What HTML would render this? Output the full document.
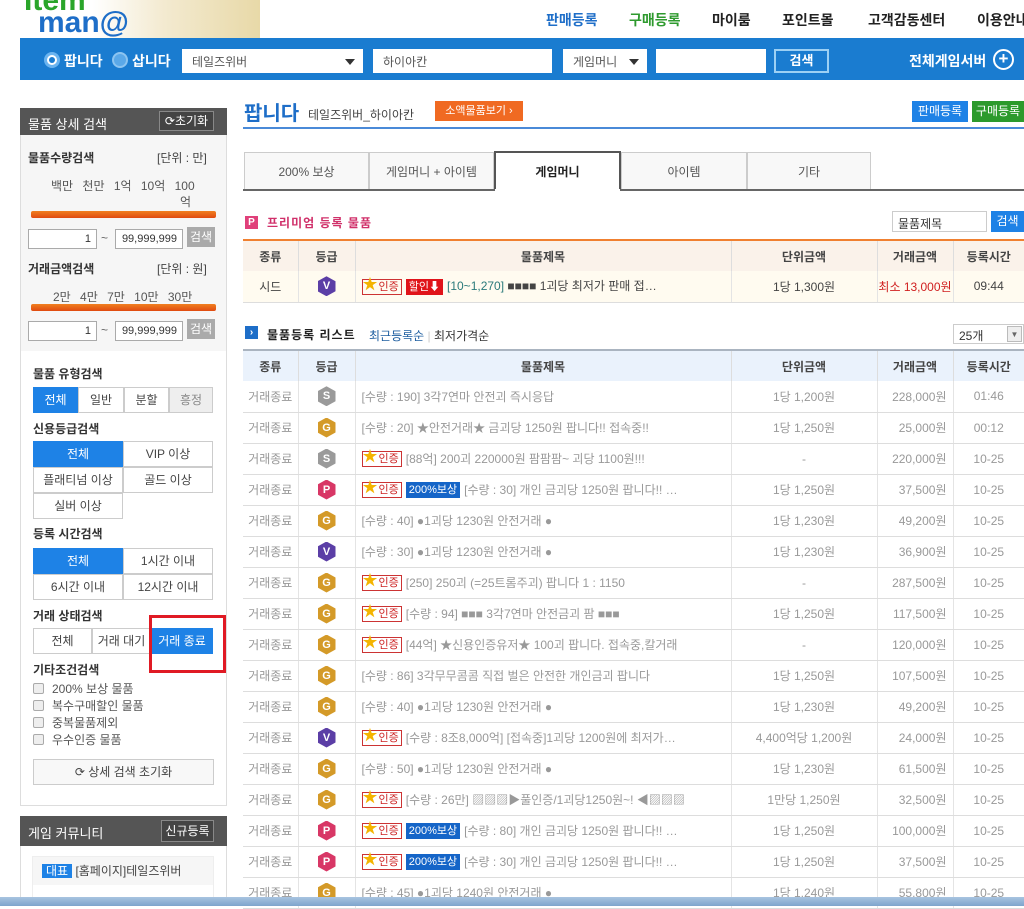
<!DOCTYPE html>
<html><head><meta charset="utf-8"><style>
*{margin:0;padding:0;box-sizing:border-box}
body{width:1024px;height:906px;overflow:hidden;background:#fff;font-family:"Liberation Sans","Noto Sans CJK KR",sans-serif;font-size:12px;color:#333;position:relative}
.a{position:absolute}
.nav{top:10px;font-size:14px;font-weight:bold;color:#222;white-space:nowrap}
.bar{left:20px;top:38px;width:1004px;height:42px;background:#1a7cd0}
.sel{background:#fff;height:24px;top:49px;font-size:12px;color:#555;padding:4px 10px}
.sel i{position:absolute;right:8px;top:10px;border:5px solid transparent;border-top:6px solid #333}
.side{left:20px;width:207px;border:1px solid #ddd}
.dh{background:#555;color:#fff;font-size:13px;padding:6px 8px}
.lbl{font-weight:bold;font-size:12px;color:#333}
.inp{height:20px;border:1px solid #aaa;background:#fff;font-size:11px;text-align:right;padding:3px 5px}
.btn{border:1px solid #ccc;background:#fff;text-align:center;font-size:12px;color:#444;height:26px;line-height:24px}
.on{background:#1e82e6;color:#fff;border-color:#1e82e6}
.slider{height:7px;background:linear-gradient(#f08020,#e04a10);border-radius:2px}
.tab{top:152px;height:38px;line-height:38px;text-align:center;border:1px solid #ccc;background:#f8f8f8;color:#555;font-size:12px}
table{border-collapse:collapse;position:absolute;left:243px;width:781px;table-layout:fixed}
td{height:31px;border-bottom:1px solid #ddd;border-right:1px solid #e4e4e4;text-align:center;color:#999;font-size:12px;white-space:nowrap;overflow:hidden}
td:last-child{border-right:none}
th{height:31px;font-weight:bold;font-size:12px;color:#444;border-right:1px solid #ddd}
th:last-child{border-right:none}
td.t{text-align:left;padding-left:6px}
td.r{text-align:right;padding-right:6px}
.h{display:inline-block;width:18px;height:20px;clip-path:polygon(50% 0,100% 25%,100% 75%,50% 100%,0 75%,0 25%);color:#fff;font-weight:bold;font-size:11px;line-height:20px;text-align:center;vertical-align:middle}
.S{background:#9a9a9a}.G{background:#d49a28}.V{background:#5b3ea6}.P{background:#d83766}
.cert{display:inline-block;border:1px solid #c33;color:#c22;font-size:11px;line-height:14px;padding:0 2px 0 16px;position:relative;margin-right:4px;vertical-align:middle}
.cert:before{content:"★";position:absolute;left:0;top:-2px;color:#f4b400;font-size:15px}
.bo{display:inline-block;background:#1565c8;color:#fff;font-size:11px;line-height:16px;padding:0 3px;margin-right:4px;vertical-align:middle}
.cb{display:inline-block;width:11px;height:11px;border:1px solid #aaa;background:#eee;margin-right:8px;vertical-align:-1px;border-radius:2px}
</style></head><body>
<div class="a" style="left:20px;top:0;width:240px;height:38px;background:linear-gradient(90deg,#fff 30%,#f3ead0 60%,#e8d9a8)"></div>
<div class="a" style="left:24px;top:-14px;font-size:30px;font-weight:bold;color:#2aa52a;line-height:30px">Item</div>
<div class="a" style="left:38px;top:8px;font-size:30px;font-weight:bold;color:#1e6ec8;line-height:30px">man@</div>
<div class="a nav" style="left:546px;color:#1e6ec8">판매등록</div>
<div class="a nav" style="left:629px;color:#2e9a2e">구매등록</div>
<div class="a nav" style="left:712px">마이룸</div>
<div class="a nav" style="left:782px">포인트몰</div>
<div class="a nav" style="left:868px">고객감동센터</div>
<div class="a nav" style="left:977px">이용안내</div>
<div class="a bar"></div>
<div class="a" style="left:44px;top:52px;width:16px;height:16px;border-radius:50%;background:#fff;border:3px solid #6ab4f0"></div>
<div class="a" style="left:49px;top:57px;width:6px;height:6px;border-radius:50%;background:#1a7cd0"></div>
<div class="a" style="left:64px;top:51px;color:#fff;font-size:14px;font-weight:bold">팝니다</div>
<div class="a" style="left:112px;top:52px;width:16px;height:16px;border-radius:50%;background:#5aa8e8;border:2px solid #8cc4f0"></div>
<div class="a" style="left:132px;top:51px;color:#fff;font-size:14px;font-weight:bold">삽니다</div>
<div class="a sel" style="left:182px;width:181px">테일즈위버<i></i></div>
<div class="a sel" style="left:373px;width:179px">하이아칸</div>
<div class="a sel" style="left:563px;width:84px">게임머니<i></i></div>
<div class="a sel" style="left:656px;width:110px"></div>
<div class="a" style="left:774px;top:49px;width:55px;height:24px;border:2px solid #9cd0f4;color:#fff;font-weight:bold;text-align:center;line-height:20px;font-size:13px">검색</div>
<div class="a" style="left:909px;top:51px;color:#fff;font-size:14px;font-weight:bold">전체게임서버</div>
<div class="a" style="left:993px;top:49px;width:21px;height:21px;border:2px solid #fff;border-radius:50%;color:#fff;text-align:center;line-height:16px;font-size:17px;font-weight:bold">+</div>

<div class="a side" style="top:108px;height:698px;background:#fff"></div>
<div class="a" style="left:21px;top:134px;width:205px;height:217px;background:#f6f6f6"></div>
<div class="a dh" style="left:20px;top:108px;width:207px;height:27px">물품 상세 검색</div>
<div class="a" style="left:159px;top:111px;width:55px;height:20px;border:1px solid #888;background:#444;color:#fff;font-size:12px;text-align:center;line-height:18px">⟳초기화</div>
<div class="a lbl" style="left:28px;top:149px">물품수량검색</div>
<div class="a" style="left:157px;top:149px;color:#444">[단위 : 만]</div>
<div class="a" style="left:51px;top:177px;color:#555;word-spacing:6px">백만 천만 1억 10억 100</div>
<div class="a" style="left:180px;top:193px;color:#555">억</div>
<div class="a slider" style="left:31px;top:211px;width:185px"></div>
<div class="a inp" style="left:28px;top:229px;width:69px">1</div>
<div class="a" style="left:101px;top:231px;color:#666">~</div>
<div class="a inp" style="left:115px;top:229px;width:68px">99,999,999</div>
<div class="a" style="left:187px;top:227px;width:28px;height:20px;background:#aaa;color:#fff;text-align:center;line-height:20px">검색</div>
<div class="a lbl" style="left:28px;top:260px">거래금액검색</div>
<div class="a" style="left:157px;top:260px;color:#444">[단위 : 원]</div>
<div class="a" style="left:53px;top:288px;color:#555;word-spacing:6px">2만 4만 7만 10만 30만</div>
<div class="a slider" style="left:31px;top:304px;width:185px"></div>
<div class="a inp" style="left:28px;top:321px;width:69px">1</div>
<div class="a" style="left:101px;top:323px;color:#666">~</div>
<div class="a inp" style="left:115px;top:321px;width:68px">99,999,999</div>
<div class="a" style="left:187px;top:319px;width:28px;height:20px;background:#aaa;color:#fff;text-align:center;line-height:20px">검색</div>

<div class="a lbl" style="left:33px;top:365px">물품 유형검색</div>
<div class="a btn on" style="left:33px;top:387px;width:45px">전체</div>
<div class="a btn" style="left:78px;top:387px;width:46px">일반</div>
<div class="a btn" style="left:124px;top:387px;width:45px">분할</div>
<div class="a btn" style="left:169px;top:387px;width:44px;background:#eee;color:#888">흥정</div>
<div class="a lbl" style="left:33px;top:420px">신용등급검색</div>
<div class="a btn on" style="left:33px;top:441px;width:90px">전체</div>
<div class="a btn" style="left:123px;top:441px;width:90px">VIP 이상</div>
<div class="a btn" style="left:33px;top:467px;width:90px">플래티넘 이상</div>
<div class="a btn" style="left:123px;top:467px;width:90px">골드 이상</div>
<div class="a btn" style="left:33px;top:493px;width:90px">실버 이상</div>
<div class="a lbl" style="left:33px;top:525px">등록 시간검색</div>
<div class="a btn on" style="left:33px;top:548px;width:90px">전체</div>
<div class="a btn" style="left:123px;top:548px;width:90px">1시간 이내</div>
<div class="a btn" style="left:33px;top:574px;width:90px">6시간 이내</div>
<div class="a btn" style="left:123px;top:574px;width:90px">12시간 이내</div>
<div class="a lbl" style="left:33px;top:607px">거래 상태검색</div>
<div class="a btn" style="left:33px;top:628px;width:59px">전체</div>
<div class="a btn" style="left:92px;top:628px;width:59px">거래 대기</div>
<div class="a btn on" style="left:151px;top:628px;width:62px">거래 종료</div>
<div class="a" style="left:149px;top:615px;width:77px;height:58px;border:3px solid #e01a24"></div>
<div class="a lbl" style="left:33px;top:661px">기타조건검색</div>
<div class="a" style="left:33px;top:681px;color:#555;line-height:17px"><span class="cb"></span>200% 보상 물품<br><span class="cb"></span>복수구매할인 물품<br><span class="cb"></span>중복물품제외<br><span class="cb"></span>우수인증 물품</div>
<div class="a btn" style="left:33px;top:759px;width:181px;background:#f8f8f8">⟳ 상세 검색 초기화</div>

<div class="a dh" style="left:20px;top:816px;width:207px;height:30px;padding-top:7px">게임 커뮤니티</div>
<div class="a" style="left:161px;top:820px;width:53px;height:22px;border:1px solid #888;background:#444;color:#fff;text-align:center;line-height:20px">신규등록</div>
<div class="a" style="left:20px;top:846px;width:207px;height:60px;border:1px solid #ddd;border-top:none"></div>
<div class="a" style="left:32px;top:856px;width:182px;height:50px;border:1px solid #eee;background:linear-gradient(#f6f6f6 0,#f6f6f6 28px,#fff 28px)"></div>
<div class="a" style="left:42px;top:862px"><span style="background:#1e82e6;color:#fff;padding:0 4px">대표</span> <span style="color:#444">[홈페이지]테일즈위버</span></div>

<div class="a" style="left:244px;top:97px;font-size:20px;font-weight:bold;color:#1e6ec8">팝니다</div>
<div class="a" style="left:308px;top:106px;color:#444">테일즈위버_하이아칸</div>
<div class="a" style="left:435px;top:101px;width:88px;height:20px;background:#f06a22;color:#fff;text-align:center;line-height:20px;font-size:11px">소액물품보기 ›</div>
<div class="a" style="left:912px;top:101px;width:56px;height:21px;background:#1e82e6;color:#fff;text-align:center;line-height:21px">판매등록</div>
<div class="a" style="left:972px;top:101px;width:52px;height:21px;background:#2c9a2c;color:#fff;text-align:center;line-height:21px">구매등록</div>
<div class="a" style="left:243px;top:127px;width:781px;height:2px;background:#4a8ad8"></div>

<div class="a tab" style="left:244px;width:125px">200% 보상</div>
<div class="a tab" style="left:369px;width:125px">게임머니 + 아이템</div>
<div class="a tab" style="left:494px;top:151px;width:127px;height:40px;background:#fff;border:2px solid #555;border-bottom:none;color:#222;font-weight:bold">게임머니</div>
<div class="a tab" style="left:621px;width:126px">아이템</div>
<div class="a tab" style="left:747px;width:124px">기타</div>
<div class="a" style="left:243px;top:189px;width:781px;height:2px;background:#666"></div>
<div class="a" style="left:495px;top:189px;width:125px;height:2px;background:#fff"></div>

<div class="a" style="left:245px;top:216px;width:13px;height:13px;background:#e0407a;color:#fff;font-size:10px;font-weight:bold;text-align:center;line-height:13px">P</div>
<div class="a" style="left:267px;top:214px;color:#d0306a;font-weight:bold;font-size:12px;letter-spacing:1px">프리미엄 등록 물품</div>
<div class="a" style="left:892px;top:211px;width:95px;height:21px;border:1px solid #ccc;padding:3px 5px;color:#333">물품제목</div>
<div class="a" style="left:991px;top:211px;width:33px;height:21px;background:#1e82e6;color:#fff;text-align:center;line-height:21px">검색</div>

<table style="top:239px;border-top:2px solid #f08030">
<colgroup><col style="width:55px"><col style="width:57px"><col style="width:376px"><col style="width:146px"><col style="width:76px"><col style="width:71px"></colgroup>
<tr style="background:#faf2ea"><th>종류</th><th>등급</th><th>물품제목</th><th>단위금액</th><th>거래금액</th><th>등록시간</th></tr>
<tr style="background:#fffbf0"><td style="color:#444">시드</td><td><span class="h V">V</span></td><td class="t" style="color:#2a7a7a"><span class="cert">인증</span><span class="bo" style="background:#e0141a">할인⬇</span>[10~1,270] <span style="color:#444">■■■■ 1괴당 최저가 판매 접…</span></td><td style="color:#444">1당 1,300원</td><td style="color:#d02020">최소 13,000원</td><td style="color:#444">09:44</td></tr>
</table>

<div class="a" style="left:245px;top:326px;width:13px;height:13px;background:#1e6ec8;color:#fff;font-size:10px;font-weight:bold;text-align:center;line-height:13px">›</div>
<div class="a" style="left:267px;top:326px;color:#222;font-weight:bold;letter-spacing:1px">물품등록 리스트</div>
<div class="a" style="left:369px;top:327px;color:#1e5ea0">최근등록순 <span style="color:#ccc">|</span> <span style="color:#333">최저가격순</span></div>
<div class="a" style="left:953px;top:324px;width:71px;height:20px;border:1px solid #ccc;padding:2px 5px;color:#333">25개<span style="position:absolute;right:1px;top:1px;width:15px;height:16px;background:#eee;border:1px solid #bbb;font-size:8px;text-align:center;line-height:15px;color:#666">▼</span></div>

<table style="top:349px;border-top:2px solid #aab4c0">
<colgroup><col style="width:55px"><col style="width:57px"><col style="width:376px"><col style="width:146px"><col style="width:76px"><col style="width:71px"></colgroup>
<tr style="background:#eaf2fc"><th>종류</th><th>등급</th><th>물품제목</th><th>단위금액</th><th>거래금액</th><th>등록시간</th></tr>
<tr><td>거래종료</td><td><span class="h S">S</span></td><td class="t">[수량 : 190] 3각7연마 안전괴 즉시응답</td><td>1당 1,200원</td><td class="r">228,000원</td><td>01:46</td></tr>
<tr><td>거래종료</td><td><span class="h G">G</span></td><td class="t">[수량 : 20] ★안전거래★ 금괴당 1250원 팝니다!! 접속중!!</td><td>1당 1,250원</td><td class="r">25,000원</td><td>00:12</td></tr>
<tr><td>거래종료</td><td><span class="h S">S</span></td><td class="t"><span class="cert">인증</span>[88억] 200괴 220000원 팜팜팜~ 괴당 1100원!!!</td><td>-</td><td class="r">220,000원</td><td>10-25</td></tr>
<tr><td>거래종료</td><td><span class="h P">P</span></td><td class="t"><span class="cert">인증</span><span class="bo">200%보상</span>[수량 : 30] 개인 금괴당 1250원 팝니다!! …</td><td>1당 1,250원</td><td class="r">37,500원</td><td>10-25</td></tr>
<tr><td>거래종료</td><td><span class="h G">G</span></td><td class="t">[수량 : 40] ●1괴당 1230원 안전거래 ●</td><td>1당 1,230원</td><td class="r">49,200원</td><td>10-25</td></tr>
<tr><td>거래종료</td><td><span class="h V">V</span></td><td class="t">[수량 : 30] ●1괴당 1230원 안전거래 ●</td><td>1당 1,230원</td><td class="r">36,900원</td><td>10-25</td></tr>
<tr><td>거래종료</td><td><span class="h G">G</span></td><td class="t"><span class="cert">인증</span>[250] 250괴 (=25트롬주괴) 팝니다 1 : 1150</td><td>-</td><td class="r">287,500원</td><td>10-25</td></tr>
<tr><td>거래종료</td><td><span class="h G">G</span></td><td class="t"><span class="cert">인증</span>[수량 : 94] ■■■ 3각7연마 안전금괴 팜 ■■■</td><td>1당 1,250원</td><td class="r">117,500원</td><td>10-25</td></tr>
<tr><td>거래종료</td><td><span class="h G">G</span></td><td class="t"><span class="cert">인증</span>[44억] ★신용인증유저★ 100괴 팝니다. 접속중,칼거래</td><td>-</td><td class="r">120,000원</td><td>10-25</td></tr>
<tr><td>거래종료</td><td><span class="h G">G</span></td><td class="t">[수량 : 86] 3각무무콤콤 직접 벌은 안전한 개인금괴 팝니다</td><td>1당 1,250원</td><td class="r">107,500원</td><td>10-25</td></tr>
<tr><td>거래종료</td><td><span class="h G">G</span></td><td class="t">[수량 : 40] ●1괴당 1230원 안전거래 ●</td><td>1당 1,230원</td><td class="r">49,200원</td><td>10-25</td></tr>
<tr><td>거래종료</td><td><span class="h V">V</span></td><td class="t"><span class="cert">인증</span>[수량 : 8조8,000억] [접속중]1괴당 1200원에 최저가…</td><td>4,400억당 1,200원</td><td class="r">24,000원</td><td>10-25</td></tr>
<tr><td>거래종료</td><td><span class="h G">G</span></td><td class="t">[수량 : 50] ●1괴당 1230원 안전거래 ●</td><td>1당 1,230원</td><td class="r">61,500원</td><td>10-25</td></tr>
<tr><td>거래종료</td><td><span class="h G">G</span></td><td class="t"><span class="cert">인증</span>[수량 : 26만] ▨▨▨▶풀인증/1괴당1250원~! ◀▨▨▨</td><td>1만당 1,250원</td><td class="r">32,500원</td><td>10-25</td></tr>
<tr><td>거래종료</td><td><span class="h P">P</span></td><td class="t"><span class="cert">인증</span><span class="bo">200%보상</span>[수량 : 80] 개인 금괴당 1250원 팝니다!! …</td><td>1당 1,250원</td><td class="r">100,000원</td><td>10-25</td></tr>
<tr><td>거래종료</td><td><span class="h P">P</span></td><td class="t"><span class="cert">인증</span><span class="bo">200%보상</span>[수량 : 30] 개인 금괴당 1250원 팝니다!! …</td><td>1당 1,250원</td><td class="r">37,500원</td><td>10-25</td></tr>
<tr><td>거래종료</td><td><span class="h G">G</span></td><td class="t">[수량 : 45] ●1괴당 1240원 안전거래 ●</td><td>1당 1,240원</td><td class="r">55,800원</td><td>10-25</td></tr>
</table>
<div class="a" style="left:0;top:897px;width:1024px;height:9px;background:linear-gradient(#a8c4e0,#7ea4cc)"></div>
</body></html>
